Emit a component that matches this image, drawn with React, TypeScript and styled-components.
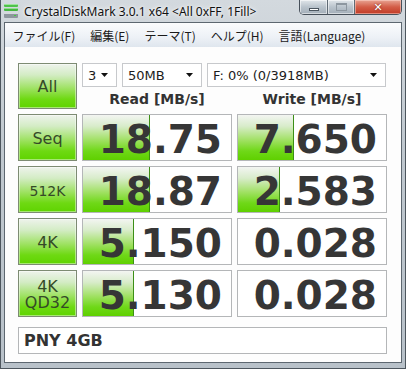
import { FC } from 'react'
import styled, { createGlobalStyle } from 'styled-components'

const GlobalStyle = createGlobalStyle`
  html, body {
    margin: 0;
    padding: 0;
    background: #c3cbd2;
  }
  * {
    box-sizing: border-box;
  }
`

type Result = {
  label: string
  small?: boolean
  read: string
  write: string
}

const results: Result[] = [
  { label: 'Seq', read: '18.75', write: '7.650' },
  { label: '512K', small: true, read: '18.87', write: '2.583' },
  { label: '4K', read: '5.150', write: '0.028' },
  { label: '4K\nQD32', read: '5.130', write: '0.028' }
]

const menuItems = ['ファイル(F)', '編集(E)', 'テーマ(T)', 'ヘルプ(H)', '言語(Language)']

// CrystalDiskMark draws the bar on a log scale: 1 decade = 1/5 of the cell
const barPercent = (value: string) => {
  const v = parseFloat(value)
  if (v <= 0) return 0
  const frac = (Math.log10(v) + 1) / 5
  return Math.max(0, Math.min(1, frac)) * 100
}

const AppIcon: FC = () => (
  <svg width="16" height="16" viewBox="0 0 16 16">
    <rect x="1" y="1" width="14" height="3" rx="1" fill="#4fc24a" />
    <rect x="1" y="1" width="14" height="1" fill="#9ce39a" />
    <rect x="1" y="5" width="14" height="3" rx="1" fill="#45b840" />
    <rect x="1" y="5" width="14" height="1" fill="#94dd90" />
    <rect x="1" y="9" width="14" height="6" rx="1" fill="#8e979e" />
    <rect x="1" y="9" width="14" height="2" fill="#d4d9dd" />
    <rect x="11" y="12" width="2" height="1" fill="#3fd13a" />
  </svg>
)

const ComboArrow: FC = () => (
  <svg width="7" height="4" viewBox="0 0 7 4">
    <path d="M0 0 L7 0 L3.5 4 Z" fill="#111" />
  </svg>
)

const ResultCell: FC<{ value: string }> = ({ value }) => {
  const pct = barPercent(value)
  return (
    <StyledCell>
      {pct > 0 && <StyledBar style={{ width: `${pct}%` }} />}
      <StyledValue>{value}</StyledValue>
    </StyledCell>
  )
}

const App: FC = () => {
  return (
    <>
      <GlobalStyle />
      <StyledWindow>
        <StyledTitleBar>
          <AppIcon />
          <StyledTitle>CrystalDiskMark 3.0.1 x64 &lt;All 0xFF, 1Fill&gt;</StyledTitle>
          <StyledCaptionButtons>
            <StyledCaptionButton $w={28}>
              <StyledMinGlyph />
            </StyledCaptionButton>
            <StyledCaptionButton $w={27}>
              <StyledMaxGlyph />
            </StyledCaptionButton>
            <StyledCloseButton>✕</StyledCloseButton>
          </StyledCaptionButtons>
        </StyledTitleBar>
        <StyledFrame>
          <StyledMenuBar>
            {menuItems.map((item) => (
              <StyledMenuItem key={item}>{item}</StyledMenuItem>
            ))}
          </StyledMenuBar>
          <StyledClient>
            <StyledGrid>
              <StyledTestButton>All</StyledTestButton>
              <StyledTopArea>
                <StyledComboRow>
                  <StyledCombo $w={35}>
                    <span>3</span>
                    <ComboArrow />
                  </StyledCombo>
                  <StyledCombo $w={80}>
                    <span>50MB</span>
                    <ComboArrow />
                  </StyledCombo>
                  <StyledCombo $w={179}>
                    <span>F: 0% (0/3918MB)</span>
                    <ComboArrow />
                  </StyledCombo>
                </StyledComboRow>
                <StyledHeaderRow>
                  <StyledHeader>Read [MB/s]</StyledHeader>
                  <StyledHeader>Write [MB/s]</StyledHeader>
                </StyledHeaderRow>
              </StyledTopArea>
              {results.map((r) => (
                <StyledRowFragment key={r.label}>
                  <StyledTestButton $small={r.small}>{r.label}</StyledTestButton>
                  <ResultCell value={r.read} />
                  <ResultCell value={r.write} />
                </StyledRowFragment>
              ))}
              <StyledComment>PNY 4GB</StyledComment>
            </StyledGrid>
          </StyledClient>
        </StyledFrame>
      </StyledWindow>
    </>
  )
}

export default App

const StyledWindow = styled.div`
  width: 406px;
  height: 369px;
  display: flex;
  flex-direction: column;
  background: linear-gradient(to bottom, #d3d9de 0%, #c0c8cf 40%, #b8c1c9 100%);
  border-left: 1px solid #4d565e;
  border-right: 1px solid #4d565e;
  border-bottom: 1px solid #4d565e;
  overflow: hidden;
`

const StyledTitleBar = styled.div`
  flex: 0 0 22px;
  height: 22px;
  display: flex;
  align-items: center;
  padding-left: 2px;
  gap: 5px;
`

const StyledTitle = styled.span`
  font-family: 'Noto Sans', 'Liberation Sans', sans-serif;
  font-size: 12px;
  color: #111;
  text-shadow: 0 0 6px #fff, 0 0 3px #fff;
`

const StyledCaptionButtons = styled.div`
  margin-left: auto;
  margin-right: 3px;
  align-self: flex-start;
  display: flex;
  height: 15px;
  border: 1px solid #47505a;
  border-top: none;
  border-radius: 0 0 5px 5px;
  overflow: hidden;
`

const StyledCaptionButton = styled.div<{ $w: number }>`
  width: ${(p) => p.$w}px;
  height: 100%;
  display: flex;
  align-items: center;
  justify-content: center;
  background: linear-gradient(to bottom, #e1e6ea 0%, #b9c3cc 50%, #a3aeb8 100%);
  border-right: 1px solid #5f6a74;
  box-shadow: inset 0 0 0 1px rgba(255, 255, 255, 0.55);
`

const StyledMinGlyph = styled.div`
  width: 10px;
  height: 3px;
  margin-top: 4px;
  background: #fff;
  border: 1px solid #4c5660;
`

const StyledMaxGlyph = styled.div`
  width: 11px;
  height: 8px;
  border: 1px solid #8d97a0;
  border-top-width: 2px;
  background: transparent;
`

const StyledCloseButton = styled.div`
  width: 46px;
  height: 100%;
  display: flex;
  align-items: center;
  justify-content: center;
  background: linear-gradient(to bottom, #e8a493 0%, #d35d47 50%, #c13a25 100%);
  box-shadow: inset 0 0 0 1px rgba(255, 220, 210, 0.5);
  color: #fff;
  font-family: 'DejaVu Sans', sans-serif;
  font-size: 11px;
  font-weight: bold;
  text-shadow: 0 0 2px #6a1a10;
`

const StyledFrame = styled.div`
  flex: 1;
  min-height: 0;
  display: flex;
  flex-direction: column;
  margin: 0 3px 5px 3px;
  border: 1px solid #5d6770;
  background: #fff;
`

const StyledMenuBar = styled.div`
  flex: 0 0 24px;
  display: flex;
  align-items: center;
  background: linear-gradient(to bottom, #fbfcfd 0%, #edf1f6 60%, #dfe6ee 100%);
`

const StyledMenuItem = styled.span`
  padding: 0 7.5px;
  font-family: 'Noto Sans CJK JP', 'Noto Sans', sans-serif;
  font-size: 12px;
  color: #1a1a1a;
`

const StyledClient = styled.div`
  flex: 1;
  padding: 16px 0 0 13px;
  background: #fdfdfd;
`

const StyledGrid = styled.div`
  display: grid;
  grid-template-columns: 59px 150px 150px;
  grid-template-rows: 46px repeat(4, 47px) 32px;
  column-gap: 5px;
  row-gap: 5px;
`

const StyledRowFragment = styled.div`
  display: contents;
`

const StyledTestButton = styled.div<{ $small?: boolean }>`
  display: flex;
  align-items: center;
  justify-content: center;
  text-align: center;
  white-space: pre-line;
  line-height: 16px;
  padding-top: 2px;
  font-family: 'DejaVu Sans', sans-serif;
  font-size: ${(p) => (p.$small ? 14 : 16)}px;
  color: #354a28;
  border: 1px solid #7d8b73;
  background: linear-gradient(to bottom, #eef3ec 0%, #d3ecc4 25%, #9fe264 55%, #6ed912 80%, #5fd400 100%);
  box-shadow: inset 0 0 0 1px rgba(255, 255, 255, 0.45);
`

const StyledTopArea = styled.div`
  grid-column: 2 / 4;
  display: flex;
  flex-direction: column;
`

const StyledComboRow = styled.div`
  display: flex;
  gap: 6px;
  height: 24px;
`

const StyledCombo = styled.div<{ $w: number }>`
  width: ${(p) => p.$w}px;
  height: 24px;
  display: flex;
  align-items: center;
  justify-content: space-between;
  padding: 0 8px 0 5px;
  border: 1px solid #c7c9cc;
  background: #fff;
  font-family: 'DejaVu Sans', sans-serif;
  font-size: 13px;
  color: #1c1c1c;

  & + & {
    margin-left: -1px;
  }
`

const StyledHeaderRow = styled.div`
  flex: 1;
  display: grid;
  grid-template-columns: 150px 150px;
  column-gap: 5px;
  align-items: center;
`

const StyledHeader = styled.div`
  text-align: center;
  font-family: 'DejaVu Sans', sans-serif;
  font-size: 14px;
  font-weight: bold;
  color: #333;
  padding-top: 2px;
`

const StyledCell = styled.div`
  position: relative;
  border: 1px solid #b4b6b8;
  background: #fff;
  overflow: hidden;
  display: flex;
  align-items: center;
  justify-content: flex-end;
  padding-right: 9px;
`

const StyledBar = styled.div`
  position: absolute;
  left: 0;
  top: 0;
  bottom: 0;
  border-right: 1px solid #3c8f16;
  background: linear-gradient(to bottom, #f3f5f2 0%, #d8ecca 25%, #a2e166 55%, #6fd818 80%, #5fd000 100%);
`

const StyledValue = styled.span`
  position: relative;
  font-family: 'DejaVu Sans', sans-serif;
  font-size: 39px;
  font-weight: bold;
  line-height: 1;
  color: #363636;
  padding-top: 4px;
`

const StyledComment = styled.div`
  grid-column: 1 / 4;
  margin-top: 5px;
  display: flex;
  align-items: center;
  padding-left: 5px;
  border: 1px solid #b4b6b8;
  background: #fff;
  font-family: 'DejaVu Sans', sans-serif;
  font-size: 16px;
  font-weight: bold;
  color: #333;
`
